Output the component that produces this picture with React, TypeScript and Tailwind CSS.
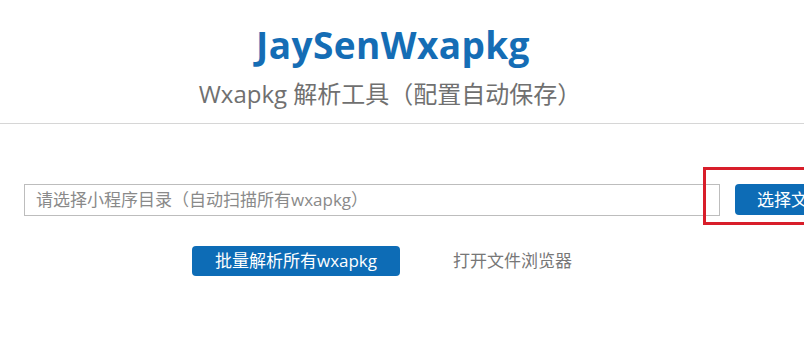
import React from "react";

export default function App() {
  const cjk = { fontFamily: '"Segoe UI", "Open Sans", "Noto Sans CJK SC", sans-serif' };
  return (
    <div className="w-[804px] h-[343px] overflow-hidden bg-white relative" style={cjk}>
      <div className="w-[780px] flex flex-col items-center pt-[23px]">
        <h1 className="text-[37px] leading-[44px] font-bold text-[#156db5] tracking-[0.4px] pl-[6px]">JaySenWxapkg</h1>
        <p className="mt-[11px] text-[24px] leading-[32px] text-[#707070]">Wxapkg 解析工具（配置自动保存）</p>
      </div>
      <div className="mt-[13px] h-px w-full bg-[#d6d6d6]" />
      <div className="relative mt-[60px] flex w-[900px] pl-[24px]">
        <div className="w-[696px] h-[32px] border border-[#bdbdbd] flex items-center pl-[11px] text-[17px] text-[#8a8a8a] shrink-0">
          请选择小程序目录（自动扫描所有wxapkg）
        </div>
        <button className="ml-[15px] w-[110px] h-[31px] rounded-[4px] bg-[#0d6cb6] text-white text-[17px] text-left pl-[22px] shrink-0">
          选择文件
        </button>
        <div className="absolute left-[703px] top-[-17px] w-[150px] h-[58px] border-[3px] border-[#d81e2a]" />
      </div>
      <div className="mt-[30px] flex items-center pl-[192px]">
        <button className="w-[208px] h-[30px] rounded-[4px] bg-[#0d6cb6] text-white text-[17px] leading-[30px]">
          批量解析所有wxapkg
        </button>
        <span className="ml-[53px] text-[17px] text-[#777777]">打开文件浏览器</span>
      </div>
    </div>
  );
}
